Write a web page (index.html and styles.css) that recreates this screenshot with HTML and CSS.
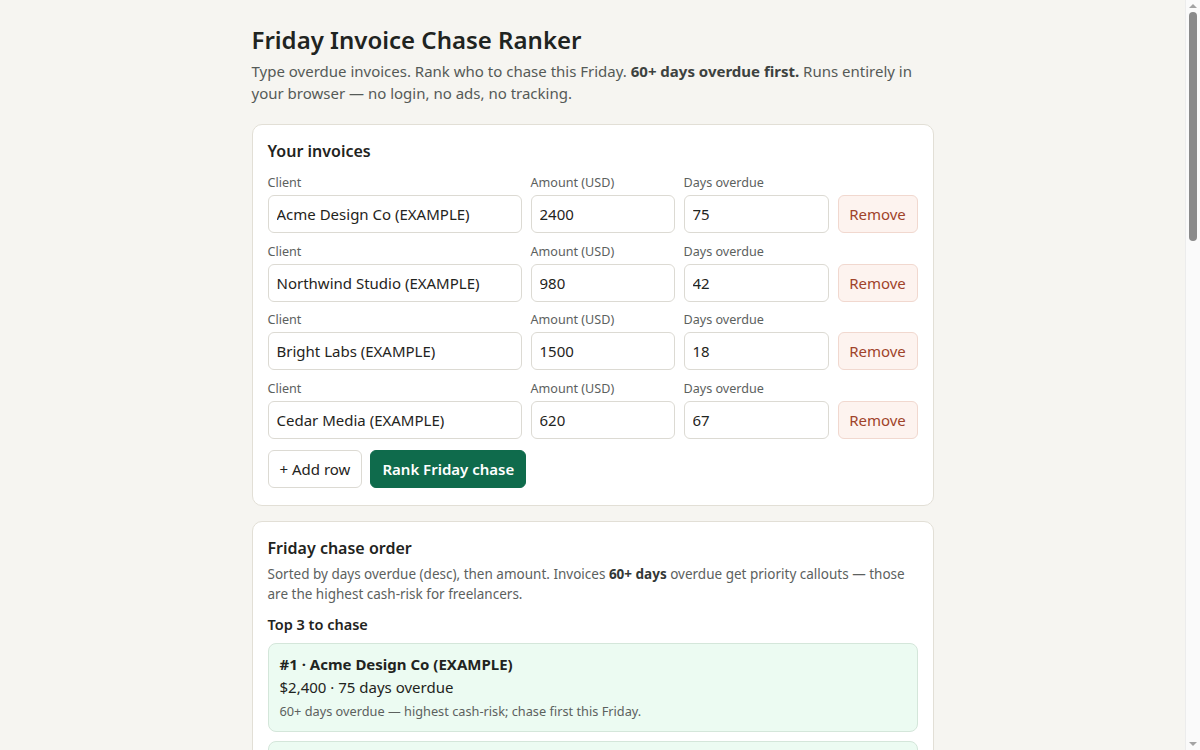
FILE: index.html
```html
<!DOCTYPE html>
<html>
	<head>
		<meta charset="UTF-8">
		<title>Friday Invoice Chase Ranker</title>
		<link rel="stylesheet" href="styles.css">
	</head>
	<body>
		<div class="page">
		<div class="wrap">
			<h1>Friday Invoice Chase Ranker</h1>
			<p class="lead">Type overdue invoices. Rank who to chase this Friday. <b>60+ days overdue first.</b> Runs entirely in your browser — no login, no ads, no tracking.</p>

			<div class="card">
				<h2>Your invoices</h2>
				<div class="rows">
					<div class="row">
						<label>Client<input type="text" value="Acme Design Co (EXAMPLE)"></label>
						<label>Amount (USD)<input type="text" value="2400"></label>
						<label>Days overdue<input type="text" value="75"></label>
						<button class="remove">Remove</button>
					</div>
					<div class="row">
						<label>Client<input type="text" value="Northwind Studio (EXAMPLE)"></label>
						<label>Amount (USD)<input type="text" value="980"></label>
						<label>Days overdue<input type="text" value="42"></label>
						<button class="remove">Remove</button>
					</div>
					<div class="row">
						<label>Client<input type="text" value="Bright Labs (EXAMPLE)"></label>
						<label>Amount (USD)<input type="text" value="1500"></label>
						<label>Days overdue<input type="text" value="18"></label>
						<button class="remove">Remove</button>
					</div>
					<div class="row">
						<label>Client<input type="text" value="Cedar Media (EXAMPLE)"></label>
						<label>Amount (USD)<input type="text" value="620"></label>
						<label>Days overdue<input type="text" value="67"></label>
						<button class="remove">Remove</button>
					</div>
				</div>
				<div class="actions">
					<button class="btn">+ Add row</button>
					<button class="btn primary">Rank Friday chase</button>
				</div>
			</div>

			<div class="card">
				<h2>Friday chase order</h2>
				<p class="note">Sorted by days overdue (desc), then amount. Invoices <b>60+ days</b> overdue get priority callouts — those are the highest cash-risk for freelancers.</p>
				<h3>Top 3 to chase</h3>
				<div class="item hot">
					<div class="item-title">#1 · Acme Design Co (EXAMPLE)</div>
					<div class="item-meta">$2,400 · 75 days overdue</div>
					<div class="item-hint">60+ days overdue — highest cash-risk; chase first this Friday.</div>
				</div>
				<div class="item hot">
					<div class="item-title">#2 · Cedar Media (EXAMPLE)</div>
					<div class="item-meta">$620 · 67 days overdue</div>
					<div class="item-hint">60+ days overdue — highest cash-risk; chase first this Friday.</div>
				</div>
				<div class="item">
					<div class="item-title">#3 · Northwind Studio (EXAMPLE)</div>
					<div class="item-meta">$980 · 42 days overdue</div>
					<div class="item-hint">Follow up with a friendly reminder.</div>
				</div>
			</div>
		</div>
		</div>
		<div class="scrollbar">
			<span class="arrow up"></span>
			<span class="thumb"></span>
			<span class="arrow down"></span>
		</div>
	</body>
</html>
```

FILE: styles.css
```css
*{
	margin: 0;
	padding: 0;
	box-sizing: border-box;
}
html, body{
	height: 100%;
	overflow: hidden;
}
body{
	display: flex;
	background-color: #f6f5f1;
	color: #1f2421;
	font-family: "Noto Sans", "Open Sans", sans-serif;
}
.page{
	flex: 1;
	height: 100%;
	overflow-y: auto;
}
/* scroll track like the browser's */
.scrollbar{
	width: 15px;
	height: 100%;
	flex-shrink: 0;
	display: flex;
	flex-direction: column;
	align-items: center;
	background-color: #fafafa;
	border-left: 1px solid #ececec;
}
.scrollbar .thumb{
	width: 8px;
	height: 229px;
	margin-top: 4px;
	border-radius: 4px;
	background-color: #8a8a8a;
}
.scrollbar .arrow{
	width: 0;
	height: 0;
	border-left: 4px solid transparent;
	border-right: 4px solid transparent;
}
.scrollbar .up{
	margin-top: 4px;
	border-bottom: 4px solid #a3a3a3;
}
.scrollbar .down{
	margin-top: auto;
	margin-bottom: 4px;
	border-top: 4px solid #a3a3a3;
}
.wrap{
	width: 682px;
	margin: 0 auto;
	padding: 24px 0 40px;
}
h1{
	font-size: 24px;
	line-height: 32px;
	font-weight: 600;
}
.lead{
	margin-top: 4px;
	font-size: 15px;
	line-height: 22px;
	color: #555a57;
}
.lead b{
	color: #3d423f;
}
.card{
	margin-top: 20px;
	background-color: #fff;
	border: 1px solid #e2dfd6;
	border-radius: 10px;
	padding: 15px 15px 17px;
}
.card + .card{
	margin-top: 15px;
}
h2{
	font-size: 16px;
	line-height: 22px;
	font-weight: 600;
}
.rows{
	margin-top: 12px;
}
.row{
	display: grid;
	grid-template-columns: 254px 144px 145px 1fr;
	column-gap: 9px;
	align-items: end;
	margin-bottom: 9.5px;
}
.row label{
	display: flex;
	flex-direction: column;
	gap: 3px;
	font-size: 12.6px;
	line-height: 18px;
	color: #5c615e;
}
.row input{
	height: 38px;
	border: 1px solid #dcdad3;
	border-radius: 6px;
	padding: 0 8px;
	font-family: inherit;
	font-size: 15px;
	color: #1f2421;
	background-color: #fff;
}
.remove{
	height: 38px;
	border: 1px solid #f1d8cf;
	border-radius: 6px;
	background-color: #fdf3ef;
	color: #a0432a;
	font-family: inherit;
	font-size: 15px;
}
.actions{
	display: flex;
	gap: 8px;
	margin-top: 11px;
}
.btn{
	height: 38px;
	padding: 0 11px;
	border: 1px solid #dcdad3;
	border-radius: 6px;
	background-color: #fff;
	color: #1f2421;
	font-family: inherit;
	font-size: 15px;
}
.btn.primary{
	background-color: #0f6b4c;
	border-color: #0f6b4c;
	color: #fff;
	font-weight: 600;
}
.note{
	margin-top: 5px;
	font-size: 13.5px;
	line-height: 20px;
	color: #5c615e;
}
.note b{
	color: #333836;
}
h3{
	margin-top: 10px;
	font-size: 14.5px;
	line-height: 20px;
	font-weight: 600;
}
.item{
	margin-top: 9px;
	border: 1px solid #d9e4dc;
	border-radius: 8px;
	background-color: #fff;
	padding: 9px 11px 11px;
}
.item.hot{
	background-color: #ecfbf2;
	border-color: #d4e6da;
}
.item-title{
	font-size: 15px;
	line-height: 22px;
	font-weight: 700;
}
.item-meta{
	margin-top: 1px;
	font-size: 15px;
	line-height: 22px;
}
.item-hint{
	margin-top: 4px;
	font-size: 12.75px;
	line-height: 18px;
	color: #5c615e;
}
```
